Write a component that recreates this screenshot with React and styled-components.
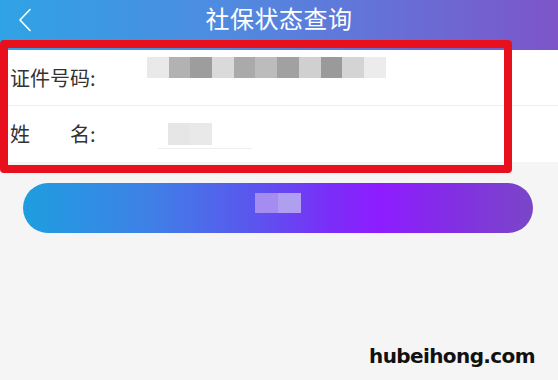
import React from "react";
import styled, { createGlobalStyle } from "styled-components";

const GlobalStyle = createGlobalStyle`
  html, body { margin: 0; padding: 0; background: #f5f5f5; }
  body { font-family: "Noto Sans CJK SC", "Noto Sans", sans-serif; }
`;

const Page = styled.div`
  position: relative;
  width: 558px;
  height: 380px;
  overflow: hidden;
  background: #f5f5f5;
`;

const Header = styled.header`
  height: 50px;
  display: grid;
  grid-template-columns: 60px 1fr 60px;
  align-items: start;
  background: linear-gradient(90deg, #2fa3e5 0%, #4f8be0 40%, #6670d6 70%, #7d55c9 100%);
  box-sizing: border-box;
  padding-top: 5px;
`;

const BackButton = styled.div`
  display: flex;
  padding-left: 18px;
  padding-top: 3px;
`;

const Title = styled.h1`
  margin: 0;
  text-align: center;
  color: #fff;
  font-size: 24px;
  font-weight: 400;
  line-height: 26px;
  letter-spacing: 0.5px;
`;

const Card = styled.section`
  background: #fff;
`;

const Row = styled.div`
  display: flex;
  align-items: center;
  height: ${(p) => p.$h}px;
  padding-left: 10px;
  border-bottom: ${(p) => (p.$divider ? "1px solid #eeeeee" : "none")};
`;

const Label = styled.span`
  width: 137px;
  flex: none;
  font-size: 20px;
  color: #333;
  line-height: 24px;
  white-space: pre;
`;

const Mosaic = styled.div`
  display: flex;
  align-self: flex-start;
  margin-top: ${(p) => p.$top}px;
  margin-left: ${(p) => p.$left}px;
  position: relative;
`;

const Block = styled.div`
  width: ${(p) => p.$w}px;
  height: ${(p) => p.$h}px;
  background: ${(p) => p.$c};
  filter: blur(0.6px);
`;

const Underline = styled.div`
  position: absolute;
  left: -10px;
  top: 25px;
  width: 94px;
  height: 1px;
  background: #eeeeee;
`;

const ButtonWrap = styled.div`
  padding: 21px 25px 0 23px;
`;

const SubmitButton = styled.div`
  height: 50px;
  border-radius: 25px;
  background: linear-gradient(90deg, #1e9ee0 0%, #3f80e6 25%, #5a56ee 45%, #7a2ef8 60%, #8e1cff 70%, #8230e2 85%, #7a46c8 100%);
  display: flex;
  justify-content: center;
  padding-top: 10px;
  box-sizing: border-box;
`;

const ButtonMosaic = styled.div`
  display: flex;
`;

const Annotation = styled.div`
  position: absolute;
  left: 0;
  top: 40px;
  width: 512px;
  height: 133px;
  box-sizing: border-box;
  border: 8px solid #e8101c;
  border-radius: 4px;
  pointer-events: none;
`;

const Watermark = styled.div`
  position: absolute;
  left: 369px;
  top: 342px;
  font-family: "DejaVu Sans", sans-serif;
  font-weight: 700;
  font-size: 20px;
  line-height: 28px;
  color: #111;
  letter-spacing: -0.6px;
`;

const idShades = ["#e9e9e9", "#b2b2b2", "#9d9d9d", "#dadada", "#aaaaaa", "#bcbcbc", "#a1a1a1", "#d0d0d0", "#9a9a9a", "#d4d4d4", "#ececec"];

export default function App() {
  return (
    <>
      <GlobalStyle />
      <Page>
        <Header>
          <BackButton>
            <svg width="14" height="24" viewBox="0 0 14 24" fill="none">
              <path d="M12 1.5 L2 12 L12 22.5" stroke="#fff" strokeWidth="1.6" strokeLinecap="round" strokeLinejoin="round" />
            </svg>
          </BackButton>
          <Title>社保状态查询</Title>
          <div />
        </Header>
        <Card>
          <Row $h={55} $divider>
            <Label>证件号码:</Label>
            <Mosaic $top={7} $left={0}>
              {idShades.map((c, i) => (
                <Block key={i} $w={21.7} $h={21} $c={c} />
              ))}
            </Mosaic>
          </Row>
          <Row $h={56}>
            <Label>{"姓　　名:"}</Label>
            <Mosaic $top={17} $left={21}>
              <Block $w={22} $h={22} $c="#e6e6e6" />
              <Block $w={22} $h={22} $c="#e9e9e9" />
              <Underline />
            </Mosaic>
          </Row>
        </Card>
        <ButtonWrap>
          <SubmitButton>
            <ButtonMosaic>
              <Block $w={23} $h={20} $c="#a48cf0" />
              <Block $w={23} $h={20} $c="#b09ef0" />
            </ButtonMosaic>
          </SubmitButton>
        </ButtonWrap>
        <Annotation />
        <Watermark>hubeihong.com</Watermark>
      </Page>
    </>
  );
}
